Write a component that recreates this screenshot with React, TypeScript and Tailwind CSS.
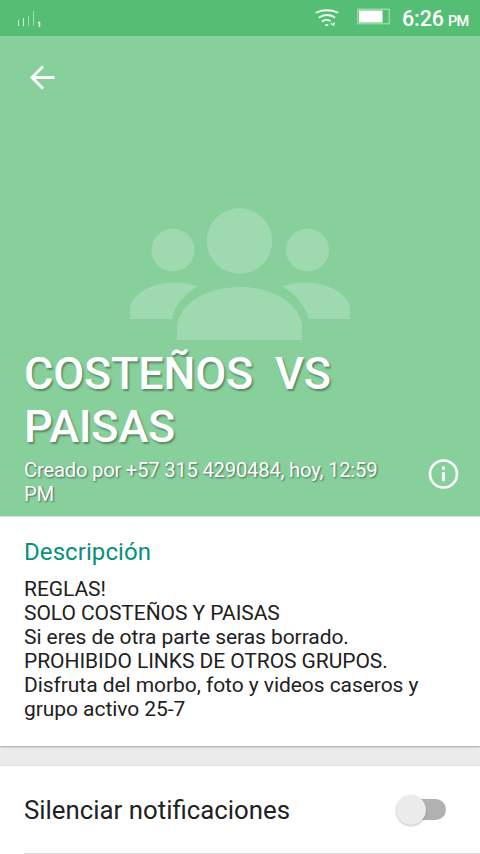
import { useState } from 'react';

const rules = [
  'REGLAS!',
  'SOLO COSTEÑOS Y PAISAS',
  'Si eres de otra parte seras borrado.',
  'PROHIBIDO LINKS DE OTROS GRUPOS.',
  'Disfruta del morbo, foto y videos caseros y grupo activo 25-7',
];

function StatusBar() {
  return (
    <div className="h-9 shrink-0 bg-[#55be75] flex items-center text-white">
      <svg className="ml-4 w-7 h-9" viewBox="0 0 28 36" fill="none" stroke="#d5f2dc">
        <path d="M2.5 20v6M7.5 18v8" />
        <path d="M12.5 16v10M17.5 11v15" strokeOpacity="0.6" />
        <path d="M22 22.5h2M23.5 22v5" strokeWidth="1.4" stroke="#fff" />
      </svg>
      <svg className="ml-[270px] w-[26px] h-9" viewBox="0 0 26 36" fill="none" stroke="#f1fff4" strokeWidth="1.8" strokeLinecap="round">
        <path d="M2.5 12.5c6-3 15-3 21 0" />
        <path d="M5.5 17.3c4.500-2.800 10.500-2.800 15 0" />
        <path d="M8.5 21.200c2.500-1.600 5-1.600 7.500-.5" />
        <path d="M12 25h1.500" />
        <path d="M17.5 23.500v.5M20.300 23.200l-1 1.800" strokeWidth="1.7" />
      </svg>
      <svg className="ml-[17px] w-[34px] h-9" viewBox="0 0 34 36">
        <rect x="0.750" y="9.250" width="31.500" height="14.500" fill="none" stroke="#a5dfb5" strokeWidth="1.2" />
        <rect x="2" y="10.500" width="23.500" height="12" fill="#fff" />
      </svg>
      <div className="ml-[11px] mt-[4px] flex items-baseline font-medium">
        <span className="text-[21.500px] leading-6 tracking-[-0.1px]">6:26</span>
        <span className="ml-1 text-[14.500px] tracking-[-0.6px]">PM</span>
      </div>
    </div>
  );
}

function GroupAvatar() {
  return (
    <svg className="absolute left-[130px] top-[172px] w-[220px] h-[132px]" viewBox="0 0 220 132" fill="#9ed9b0">
      <circle cx="109.500" cy="33" r="32.800" />
      <circle cx="43" cy="42" r="21.500" />
      <circle cx="177.500" cy="42" r="21.500" />
      <path d="M47 132v-16C52 93 79 79 109.500 79S167 93 172 116v16z" />
      <path d="M0 111V97C7 82 26 74.500 45 74.500c9 0 16 1.500 23 4C55 85 45 96 42 111z" />
      <path d="M220 111V97C213 82 194 74.500 175 74.500c-9 0-16 1.500-23 4C165 85 174 96 179 111z" />
    </svg>
  );
}

function App() {
  const [muted, setMuted] = useState(false);

  return (
    <div className="h-[854px] w-[480px] overflow-hidden flex flex-col bg-[#ebebeb] text-[#212121] font-[Roboto,sans-serif]">
      <StatusBar />

      {/* Group header */}
      <div className="relative h-[480px] shrink-0 bg-[#87d09b] flex flex-col justify-between text-white">
        <GroupAvatar />
        <button className="ml-[29px] mt-[28px] w-7 h-7">
          <svg className="w-7 h-7" viewBox="0 0 28 28" fill="none" stroke="#fff" strokeWidth="2.900">
            <path d="M25.500 13.500H3M14 2.500l-11 11 11 11" />
          </svg>
        </button>
        <div className="relative pl-6 pb-[10px]">
          <h1 className="text-[45px] leading-[53px] font-medium tracking-[-0.2px] whitespace-pre [text-shadow:1.5px_1.5px_2px_rgba(0,0,0,0.35)]">
            {'COSTEÑOS  VS\nPAISAS'}
          </h1>
          <div className="mt-[5px] flex">
            <p className="w-[370px] text-[20.250px] leading-6 tracking-[-0.23px] [text-shadow:1px_1px_2px_rgba(0,0,0,0.5)]">
              Creado por +57 315 4290484, hoy, 12:59 PM
            </p>
            <svg className="ml-[34px] w-[31px] h-[32px]" viewBox="0 0 31 31" fill="none" stroke="#fff">
              <circle cx="15.500" cy="15.500" r="13.500" strokeWidth="2.600" />
              <path d="M15.500 8v3.200M15.500 13.800v9" strokeWidth="3" />
            </svg>
          </div>
        </div>
      </div>

      {/* Description */}
      <div className="h-[230px] shrink-0 bg-white px-6 pt-[21px] border-t border-[#d9e5dc] shadow-[0_1px_2px_rgba(0,0,0,0.3)]">
        <h2 className="text-[24px] leading-7 tracking-[0.08px] text-[#07917a]">Descripción</h2>
        <div className="mt-[11px] text-[21px] leading-6 tracking-[-0.06px]">
          {rules.map((line) => (
            <p key={line}>{line}</p>
          ))}
        </div>
      </div>

      {/* Mute notifications */}
      <div className="mt-5 h-[100px] shrink-0 bg-white pl-6 shadow-[0_0_1px_rgba(0,0,0,0.25)]">
        <div className="h-[88px] flex items-center justify-between pr-[34px] border-b border-[#dedede]">
          <span className="text-[25.800px] leading-8">Silenciar notificaciones</span>
          <button
            role="switch"
            aria-checked={muted}
            onClick={() => setMuted(!muted)}
            className={`w-[50px] h-[21px] rounded-full bg-[#b1b1b1] flex items-center ${muted ? 'justify-end' : 'justify-start'}`}
          >
            <span className="w-[30px] h-[30px] shrink-0 rounded-full bg-[#ebebeb] shadow-[0_1px_2px_rgba(0,0,0,0.25)]" />
          </button>
        </div>
      </div>
    </div>
  );
}

export default App;
